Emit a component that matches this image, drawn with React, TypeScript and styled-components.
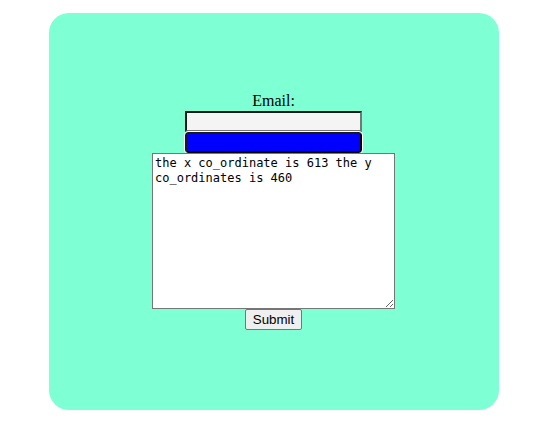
import React from "react";
import styled, { createGlobalStyle } from "styled-components";

const Global = createGlobalStyle`
  html, body { margin: 0; padding: 0; background: #ffffff; }
  body { font-family: "Liberation Serif", "Times New Roman", serif; font-size: 16px; }
`;

const Page = styled.div`
  width: 534px;
  height: 431px;
  padding: 13px 0 0 49px;
  box-sizing: border-box;
`;

const Card = styled.form`
  width: 450px;
  height: 397px;
  background: #7fffd4;
  border-radius: 20px;
  box-sizing: border-box;
  padding: 79px 1px 0 0;
  display: flex;
  flex-direction: column;
  align-items: center;
`;

const Label = styled.label`
  display: block;
  font-family: "Liberation Serif", "Times New Roman", serif;
  font-size: 16px;
  line-height: 18px;
  height: 19px;
  color: #000;
`;

const Field = styled.input<{ $filled?: boolean }>`
  width: 177px;
  height: 21px;
  box-sizing: border-box;
  margin: 0;
  padding: 1px 2px;
  font-family: "Liberation Sans", Arial, sans-serif;
  font-size: 13px;
  background: ${(p) => (p.$filled ? "#0000ff" : "#f4f4f4")};
  border: 2px solid #1a1a1a;
  border-right-color: ${(p) => (p.$filled ? "#000" : "#767676")};
  border-bottom-color: ${(p) => (p.$filled ? "#000" : "#767676")};
  border-radius: ${(p) => (p.$filled ? "3px" : "0")};
  outline: ${(p) => (p.$filled ? "1px solid #ffffff" : "none")};
  outline-offset: 0;
`;

const Area = styled.textarea`
  width: 243px;
  height: 156px;
  box-sizing: border-box;
  margin: 0;
  padding: 2px;
  border: 1px solid #767676;
  background: #fff;
  font-family: "DejaVu Sans Mono", "Liberation Mono", monospace;
  font-size: 12px;
  line-height: 15px;
  color: #000;
  resize: both;
`;

const Button = styled.button`
  width: 57px;
  height: 21px;
  margin: 0;
  box-sizing: border-box;
  padding: 1px 6px;
  background: #efefef;
  border: 1px solid #767676;
  border-radius: 2px;
  font-family: "Liberation Sans", Arial, sans-serif;
  font-size: 13.33px;
  color: #000;
`;

export default function App() {
  return (
    <>
      <Global />
      <Page>
        <Card onSubmit={(e) => e.preventDefault()}>
          <Label htmlFor="email">Email:</Label>
          <Field id="email" type="text" />
          <Field $filled type="text" />
          <Area defaultValue="the x co_ordinate is 613 the y co_ordinates is 460" />
          <Button type="submit">Submit</Button>
        </Card>
      </Page>
    </>
  );
}
